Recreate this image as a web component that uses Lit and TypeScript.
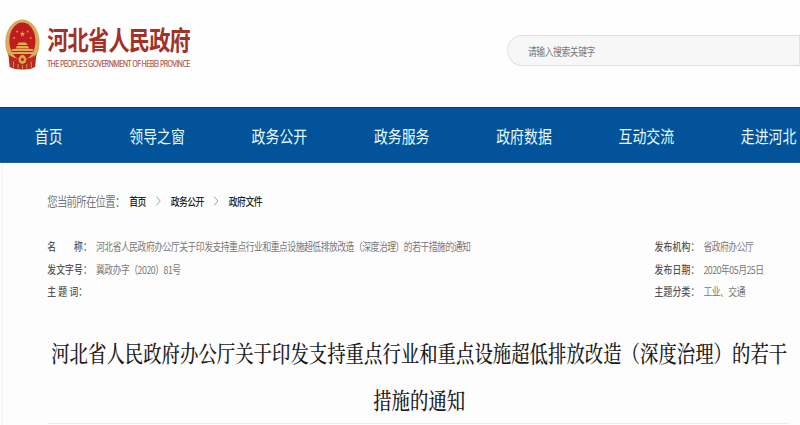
import { LitElement, html, css, svg } from "lit";
import { customElement } from "lit/decorators.js";

const NAV = ["首页", "领导之窗", "政务公开", "政务服务", "政府数据", "互动交流", "走进河北"];
const LEFT = [
  ["名　　称：", "河北省人民政府办公厅关于印发支持重点行业和重点设施超低排放改造（深度治理）的若干措施的通知"],
  ["发文字号：", "冀政办字（2020）81号"],
  ["主 题 词：", ""],
];
const RIGHT = [
  ["发布机构：", "省政府办公厅"],
  ["发布日期：", "2020年05月25日"],
  ["主题分类：", "工业、交通"],
];
const STARS = [[20, 15, 3.2], [10.5, 19, 1.5], [14, 12.5, 1.5], [26, 12.5, 1.5], [29.5, 19, 1.5]];

const star = (cx: number, cy: number, r: number) => {
  const pts = Array.from({ length: 10 }, (_, i) => {
    const a = (Math.PI / 5) * i - Math.PI / 2;
    const d = i % 2 ? r * 0.42 : r;
    return `${(cx + Math.cos(a) * d).toFixed(2)},${(cy + Math.sin(a) * d).toFixed(2)}`;
  }).join(" ");
  return svg`<polygon points=${pts} fill="#e8a055"/>`;
};

@customElement("state-emblem")
class StateEmblem extends LitElement {
  static styles = css`
    :host { display: block; width: 44px; height: 51px; }
    svg { display: block; width: 100%; height: 100%; }
  `;
  render() {
    return html`<svg viewBox="0 0 40 51" preserveAspectRatio="none">
      <ellipse cx="20" cy="23.5" rx="19.5" ry="23" fill="#d5ad5d"/>
      <path d="M4 34 L5.5 48 Q12 51 20 50.5 Q28 51 34.5 48 L36 34Z" fill="#b32a1f"/>
      <path d="M1 28 Q3 37 12 42 Q20 46 28 42 Q37 37 39 28 L35 25 H5Z" fill="#d5ad5d"/>
      <ellipse cx="20" cy="22" rx="14.8" ry="18.6" fill="#bd1d1b"/>
      ${STARS.map(([x, y, r]) => star(x, y, r))}
      <path d="M14 26 L16 23.5 H24 L26 26Z M12 29.5 L14 27 H26 L28 29.5Z M8 32 V30 H32 V32Z M7 35 V33 H33 V35Z" fill="#e0ad55"/>
      <path d="M5 36 Q13 41 20 39 Q27 41 35 36 L34 42 Q26 45 20 43 Q14 45 6 42Z" fill="#bf281f"/>
      <circle cx="20" cy="40.5" r="4.4" fill="#d9a950"/>
      <circle cx="20" cy="40.5" r="1.8" fill="#b0371c"/>
      <path d="M10 42.5 V48.5 M15 45 V49.5 M20 46 V50 M25 45 V49.5 M30 42.5 V48.5" stroke="#d59a49" stroke-width="1.1"/>
    </svg>`;
  }
}

@customElement("app-root")
class AppRoot extends LitElement {
  static styles = css`
    :host {
      display: block; width: 800px; height: 425px; overflow: hidden; background: #fdfdfd;
      font-family: "Liberation Sans", "Noto Sans CJK SC", sans-serif;
    }
    .page {
      width: 1000px; height: 425px; transform: scaleX(0.8); transform-origin: 0 0;
      display: flex; flex-direction: column; white-space: nowrap;
    }
    .header {
      height: 107px; flex: none; box-sizing: border-box; display: flex; background: #fefefe;
      justify-content: space-between; align-items: flex-start; padding: 19px 0 0 6px;
    }
    .brand { display: flex; gap: 9px; }
    .name {
      font-family: "Noto Sans CJK SC", sans-serif; font-weight: 700; font-size: 26.5px;
      letter-spacing: -1px; line-height: 39px; color: #a23227;
    }
    .latin {
      font-family: "Open Sans", sans-serif; font-size: 8.8px; line-height: 12px; color: #a9584e;
      letter-spacing: -0.63px; -webkit-text-stroke: 0.2px #a9584e;
    }
    .search {
      width: 366px; height: 31px; box-sizing: border-box; margin-top: 16px;
      border: 1px solid #dedede; border-radius: 19px / 16px; border-top-right-radius: 0;
      border-bottom-right-radius: 0; background: #f7f7f7; padding-left: 25px;
      font: 11px/30px "Noto Sans CJK SC", sans-serif; letter-spacing: -0.55px; color: #777;
    }
    .nav {
      height: 56px; flex: none; box-sizing: border-box; background: #02539a;
      border-top: 1px solid #0a4377; border-bottom: 1px solid #24649b;
      display: flex; gap: 83.3px; align-items: center; padding: 1px 0 0 43.5px; color: #e6fbff;
      font: 400 17.4px/24px "Noto Sans CJK SC", sans-serif;
    }
    .body {
      flex: 1; margin-left: 2px; border-left: 1px solid #ededed; padding-left: 56px;
      display: flex; flex-direction: column;
    }
    .crumbs {
      display: flex; align-items: center; height: 20px; margin-top: 28px;
      font: 500 11px/20px "Noto Sans CJK SC", sans-serif; letter-spacing: -0.6px; color: #222;
    }
    .where { font-size: 13px; font-weight: 400; letter-spacing: -0.9px; color: #777; width: 102.5px; }
    .sep { width: 6px; height: 10px; margin: 0 12.5px 0 12.5px; fill: none; stroke: #999; stroke-width: 1; }
    .meta {
      display: flex; justify-content: space-between; margin-top: 24px; padding-right: 45.5px;
      font: 11px/22.7px "Noto Sans CJK SC", sans-serif; color: #777;
    }
    .row { display: flex; height: 22.7px; }
    .key { width: 61px; font-weight: 500; letter-spacing: 0.2px; color: #555; white-space: pre; }
    .val { letter-spacing: -0.6px; }
    h1 {
      margin: 25.5px 0 0 3px; width: 924px; text-align: center; color: #1b1b1b;
      font: 500 23px/47px "Noto Serif CJK SC", "Noto Serif SC", "Noto Sans CJK SC", serif;
    }
    .rule { height: 1px; margin-top: auto; margin-bottom: 1px; background: #ececec; margin-right: 14px; }
  `;

  private rows(list: string[][]) {
    return list.map(([k, v]) => html`<div class="row"><span class="key">${k}</span><span class="val">${v}</span></div>`);
  }

  render() {
    const sep = html`<svg class="sep" viewBox="0 0 6 10"><path d="M.5 .5 L5.3 5 L.5 9.5"/></svg>`;
    return html`<div class="page">
      <header class="header">
        <div class="brand">
          <state-emblem></state-emblem>
          <div>
            <div class="name">河北省人民政府</div>
            <div class="latin">THE PEOPLE'S GOVERNMENT OF HEBEI PROVINCE</div>
          </div>
        </div>
        <div class="search">请输入搜索关键字</div>
      </header>
      <nav class="nav">${NAV.map((n) => html`<span>${n}</span>`)}</nav>
      <main class="body">
        <div class="crumbs">
          <span class="where">您当前所在位置：</span>
          <span>首页</span>${sep}<span>政务公开</span>${sep}<span>政府文件</span>
        </div>
        <section class="meta">
          <div>${this.rows(LEFT)}</div>
          <div>${this.rows(RIGHT)}</div>
        </section>
        <h1>河北省人民政府办公厅关于印发支持重点行业和重点设施超低排放改造（深度治理）的若干<br />措施的通知</h1>
        <div class="rule"></div>
      </main>
    </div>`;
  }
}
